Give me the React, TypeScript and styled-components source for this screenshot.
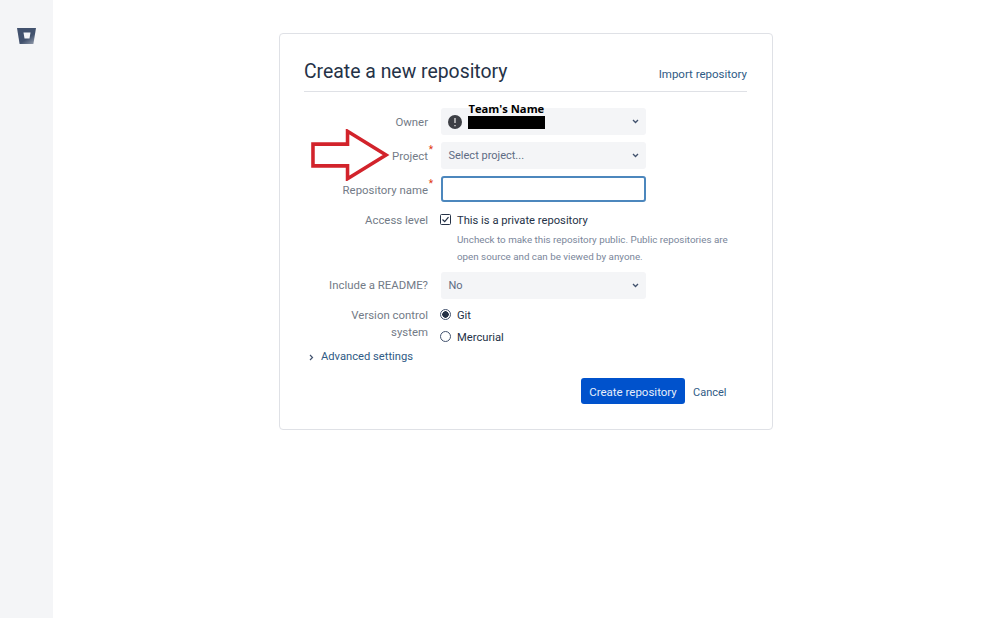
import React from 'react'
import styled, { createGlobalStyle } from 'styled-components'

const GlobalStyle = createGlobalStyle`
  html, body {
    margin: 0;
    padding: 0;
    height: 100%;
    background: #fff;
    font-family: Roboto, 'Open Sans', 'Liberation Sans', sans-serif;
    color: #172b4d;
  }
`

const Page = styled.div`
  display: flex;
  height: 618px;
  overflow: hidden;
`

const Sidebar = styled.aside`
  width: 53px;
  flex: none;
  background: #f4f5f7;
  padding: 27px 0 0 17px;
  box-sizing: border-box;
`

const Main = styled.main`
  flex: 1;
  padding: 33px 0 0 226px;
`

const Card = styled.section`
  position: relative;
  width: 494px;
  height: 397px;
  box-sizing: border-box;
  padding: 22px 25px 0 24px;
  border: 1px solid #dfe1e6;
  border-radius: 4px;
`

const Header = styled.header`
  display: flex;
  justify-content: space-between;
  align-items: flex-end;
  height: 35px;
  border-bottom: 1px solid #dfe1e6;
`

const Title = styled.h1`
  margin: 0 0 5px;
  font-size: 19.4px;
  line-height: 28px;
  font-weight: 400;
  color: #253247;
`

const Link = styled.a<{ $size?: number }>`
  font-size: ${({ $size }) => $size ?? 11.2}px;
  line-height: 16px;
  color: #2f5b85;
  text-decoration: none;
`

const ImportLink = styled(Link)`
  margin-bottom: 9px;
`

const CancelLink = styled(Link)`
  margin-top: 3px;
`

const Form = styled.div`
  display: flex;
  flex-direction: column;
  margin-top: 16px;
`

const Row = styled.div<{ $h: number; $mb?: number }>`
  display: grid;
  grid-template-columns: 124px 205px;
  column-gap: 13px;
  height: ${({ $h }) => $h}px;
  margin-bottom: ${({ $mb }) => $mb ?? 0}px;
`

const Label = styled.label<{ $pt?: number }>`
  text-align: right;
  font-size: 11.4px;
  line-height: 17px;
  color: #737b87;
  padding-top: ${({ $pt }) => $pt ?? 6}px;
`

const Required = styled.sup`
  position: absolute;
  top: -3px;
  right: -5px;
  font-size: 10px;
  line-height: 10px;
  color: #de350b;
`

const LabelText = styled.span`
  position: relative;
  display: inline-block;
`

const Select = styled.div`
  position: relative;
  display: flex;
  align-items: center;
  justify-content: space-between;
  height: 27px;
  box-sizing: border-box;
  margin-left: -0.5px;
  padding: 0 7px 0 8px;
  background: #f4f5f7;
  border-radius: 3px;
  font-size: 11px;
  color: #5e6c84;
`

const OwnerSelect = styled(Select)`
  padding-left: 7px;
`

const Chevron = styled.svg`
  width: 7px;
  height: 5px;
  fill: none;
  stroke: #42526e;
  stroke-width: 1.6;
`

const Input = styled.input`
  display: block;
  width: 205px;
  height: 26px;
  box-sizing: border-box;
  border: 2px solid #4c87bd;
  border-radius: 3px;
  background: #fff;
  outline: none;
`

const OwnerIcon = styled.svg`
  width: 14px;
  height: 14px;
`

const TeamName = styled.span`
  position: absolute;
  left: 28px;
  top: -6px;
  font-family: 'Open Sans', sans-serif;
  font-size: 11.2px;
  line-height: 14px;
  font-weight: 700;
  color: #000;
  white-space: nowrap;
`

const Redaction = styled.span`
  position: absolute;
  left: 27px;
  top: 8px;
  width: 77px;
  height: 13px;
  background: #000;
`

const Choice = styled.div`
  display: flex;
  align-items: center;
  gap: 6px;
  height: 17px;
  font-size: 11.2px;
  color: #253247;
`

const ChoiceText = styled.span`
  margin-top: 2px;
`

const ChoiceList = styled.div`
  display: flex;
  flex-direction: column;
  gap: 5px;
  margin-left: -1px;
`

const AccessBlock = styled.div`
  margin-left: -1px;
`

const Check = styled.svg`
  width: 11px;
  height: 11px;
  flex: none;
`

const Hint = styled.p`
  margin: 3px 0 0 17px;
  width: 290px;
  font-size: 9.8px;
  line-height: 17px;
  color: #7a869a;
`

const Radio = styled.span<{ $on?: boolean }>`
  width: 11px;
  height: 11px;
  flex: none;
  box-sizing: border-box;
  border: 1px solid #42526e;
  border-radius: 50%;
  background: ${({ $on }) => ($on ? 'radial-gradient(circle, #253247 0 3px, #fff 3.5px)' : '#fff')};
`

const Advanced = styled.div`
  display: flex;
  align-items: center;
  gap: 7px;
  margin: 5px 0 0 5px;
`

const Actions = styled.div`
  display: flex;
  align-items: center;
  gap: 8px;
  margin: 13px 0 0 277px;
`

const Button = styled.button`
  width: 104px;
  height: 26px;
  padding: 1px 0 0;
  border: 0;
  border-radius: 3px;
  background: #0052cc;
  color: #e6eefb;
  font-family: inherit;
  font-size: 11.5px;
`

const Arrow = styled.svg`
  position: absolute;
  left: 31px;
  top: 95px;
  width: 79px;
  height: 52px;
`

const Logo = () => (
  <svg width="19" height="18" viewBox="0 0 19 18">
    <defs>
      <linearGradient id="bucket" x1="0.2" y1="0.2" x2="0.85" y2="1">
        <stop offset="0.55" stopColor="#42526e" />
        <stop offset="1" stopColor="#8d97a8" />
      </linearGradient>
    </defs>
    <path d="M0 1h19l-2.6 16H2.6z" fill="url(#bucket)" />
    <path d="M6.5 5.5h7l-1 6h-5z" fill="#f4f5f7" />
  </svg>
)

const Caret = () => (
  <Chevron viewBox="0 0 8 6">
    <path d="M1 1.2l3 3 3-3" />
  </Chevron>
)

export default function App() {
  return (
    <Page>
      <GlobalStyle />
      <Sidebar>
        <Logo />
      </Sidebar>
      <Main>
        <Card>
          <Header>
            <Title>Create a new repository</Title>
            <ImportLink href="#" $size={11.5}>Import repository</ImportLink>
          </Header>
          <Form>
            <Row $h={27} $mb={7}>
              <Label>Owner</Label>
              <OwnerSelect>
                <OwnerIcon viewBox="0 0 14 14">
                  <circle cx="7" cy="7" r="7" fill="#3d3f45" />
                  <path d="M7 3v5M7 10v1.2" stroke="#d8d8d8" strokeWidth="1.4" />
                </OwnerIcon>
                <TeamName>Team's Name</TeamName>
                <Redaction />
                <Caret />
              </OwnerSelect>
            </Row>
            <Row $h={27} $mb={7}>
              <Label>
                <LabelText>
                  Project<Required>*</Required>
                </LabelText>
              </Label>
              <Select>
                Select project...
                <Caret />
              </Select>
            </Row>
            <Row $h={26} $mb={9}>
              <Label>
                <LabelText>
                  Repository name<Required>*</Required>
                </LabelText>
              </Label>
              <Input />
            </Row>
            <Row $h={56} $mb={5}>
              <Label $pt={1}>Access level</Label>
              <AccessBlock>
                <Choice>
                  <Check viewBox="0 0 11 11">
                    <rect x=".5" y=".5" width="10" height="10" rx="1" fill="#fff" stroke="#253247" />
                    <path d="M2.5 5.5l2.2 2.2 3.8-4.6" fill="none" stroke="#253247" strokeWidth="1.2" />
                  </Check>
                  <ChoiceText>This is a private repository</ChoiceText>
                </Choice>
                <Hint>
                  Uncheck to make this repository public. Public repositories are open source and
                  can be viewed by anyone.
                </Hint>
              </AccessBlock>
            </Row>
            <Row $h={27} $mb={7}>
              <Label $pt={5}>Include a README?</Label>
              <Select>
                No
                <Caret />
              </Select>
            </Row>
            <Row $h={38}>
              <Label $pt={1}>
                Version control
                <br />
                system
              </Label>
              <ChoiceList>
                <Choice>
                  <Radio $on />
                  <ChoiceText>Git</ChoiceText>
                </Choice>
                <Choice>
                  <Radio />
                  <ChoiceText>Mercurial</ChoiceText>
                </Choice>
              </ChoiceList>
            </Row>
            <Advanced>
              <svg width="5" height="7" viewBox="0 0 5 7" fill="none" stroke="#42526e" strokeWidth="1.2">
                <path d="M1 1l2.5 2.5L1 6" />
              </svg>
              <Link href="#">Advanced settings</Link>
            </Advanced>
            <Actions>
              <Button>Create repository</Button>
              <CancelLink href="#" $size={11}>Cancel</CancelLink>
            </Actions>
          </Form>
          <Arrow viewBox="0 0 80 52">
            <path d="M2 15h35V2l39 24-39 24V37H2z" fill="none" stroke="#d2232b" strokeWidth="3.6" />
          </Arrow>
        </Card>
      </Main>
    </Page>
  )
}
